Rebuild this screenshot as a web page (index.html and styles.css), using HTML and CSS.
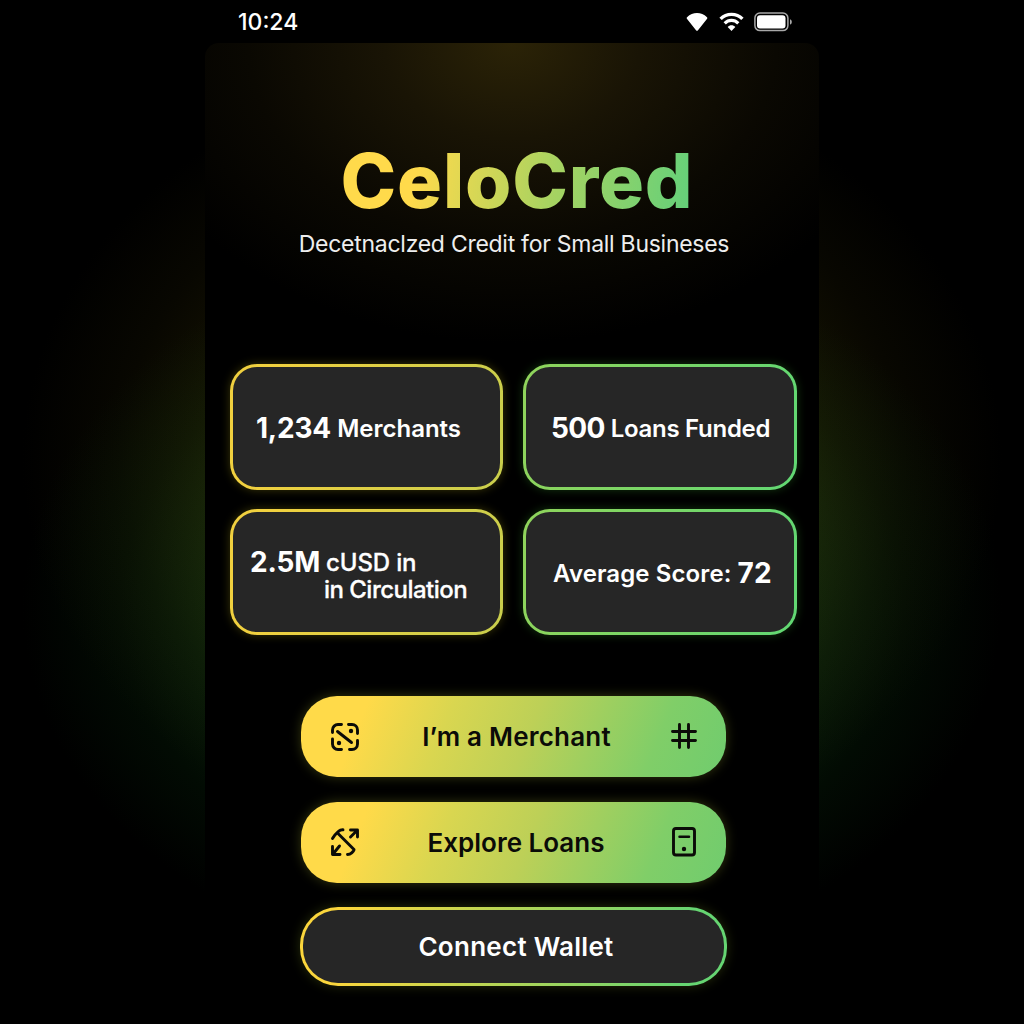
FILE: index.html
```html
<!DOCTYPE html>
<html lang="en">
<head>
<meta charset="utf-8">
<title>CeloCred</title>
<link rel="stylesheet" href="styles.css">
</head>
<body>
<div class="phone">
  <header class="status">
    <span class="time">10:24</span>
    <div class="status-icons">
      <svg class="signal" width="22" height="20" viewBox="0 0 22 20"><path d="M1 5.200C4 2.200 7.300 .9 11 .9s7 1.300 10 4.300c.5.5.5 1 .1 1.500L12 18.200c-.6.8-1.400.8-2 0L.9 6.700C.5 6.200.5 5.700 1 5.200z" fill="#fff"/></svg>
      <svg class="wifi" width="25" height="20" viewBox="0 0 25 20" fill="none" stroke="#fff"><path d="M1.600 6.900C4.600 3.900 8.300 2.400 12.500 2.400s7.900 1.500 10.900 4.500" stroke-width="3.400"/><path d="M5.700 11.300c1.900-1.900 4.200-2.900 6.800-2.900s4.900 1 6.800 2.900" stroke-width="3.200"/><path d="M8.700 15c1-1.100 2.300-1.700 3.800-1.700s2.800.6 3.800 1.700l-3.800 4z" fill="#fff" stroke="none"/></svg>
      <svg class="battery" width="39" height="20" viewBox="0 0 39 20"><rect x=".9" y="1" width="33" height="17.600" rx="5" fill="none" stroke="#a8a8a8" stroke-width="1.500"/><rect x="3" y="3.200" width="28.500" height="13.300" rx="3" fill="#fff"/><path d="M36 7.200c2.400.6 2.400 4.800 0 5.400z" fill="#a8a8a8"/></svg>
    </div>
  </header>
  <main class="panel">
    <h1 class="title">CeloCred</h1>
    <p class="tagline">Decetnaclzed Credit for Small Busineses</p>
    <section class="stats">
      <div class="card gold merchants"><p><b>1,234</b> Merchants</p></div>
      <div class="card green loans"><p><b>500</b> Loans Funded</p></div>
      <div class="card gold supply"><p><b>2.5M</b> <span class="unit">cUSD in</span></p><p class="second">in Circulation</p></div>
      <div class="card green score"><p>Average Score: <b>72</b></p></div>
    </section>
    <nav class="actions">
      <button class="btn filled">
        <svg width="30" height="30" viewBox="0 0 30 30" fill="none" stroke="#0b0b08" stroke-width="2.900" stroke-linecap="round"><path d="M2.500 10.500V8A5.500 5.500 0 0 1 8 2.500h3.500M18.500 2.500H22A5.500 5.500 0 0 1 27.500 8v3.500M27.500 18.500V22a5.500 5.500 0 0 1-5.500 5.500h-2.500M11.500 27.500H8A5.500 5.500 0 0 1 2.500 22v-5M7.500 9.500l14 11"/><g fill="#0b0b08" stroke="none"><circle cx="21" cy="9" r="2.200"/><circle cx="9" cy="21" r="2.200"/></g></svg>
        <span class="label merchant-label">I’m a Merchant</span>
        <svg width="28" height="30" viewBox="0 0 28 30" fill="none" stroke="#0b0b08" stroke-width="2.900" stroke-linecap="round"><path d="M9.500 2.500v23M18.500 2.500v23M2.500 9.500h23M2.500 18.500h23"/></svg>
      </button>
      <button class="btn filled explore">
        <svg width="30" height="30" viewBox="0 0 30 30" fill="none" stroke="#0b0b08" stroke-width="2.900" stroke-linecap="round" stroke-linejoin="round"><path d="M2.500 11.500C4 8.800 6 6.600 8.500 4.400c1.300-1.200 2.800-1.700 4.500-1.600M8 6.500 24 22.500c.5.600-1 2.200-2.300 3.400-1.200 1.100-2.500 1.600-4.200 1.600M20.500 3h7v7M27 3.500l-6.500 6.500M2.500 19.500v8h7.500M3 27l6.500-8"/></svg>
        <span class="label">Explore Loans</span>
        <svg width="28" height="32" viewBox="0 0 28 32" fill="none" stroke="#0b0b08" stroke-width="2.900" stroke-linecap="round"><rect x="3.500" y="2.500" width="21" height="26.500" rx="2.500"/><path d="M9.500 10.800h9.500" stroke-width="2.500"/><circle cx="14" cy="23" r="2.200" fill="#0b0b08" stroke="none"/></svg>
      </button>
      <button class="btn outline"><span class="label wallet-label">Connect Wallet</span></button>
    </nav>
  </main>
</div>
</body>
</html>
```
FILE: styles.css
```css
* { box-sizing: border-box; }
body {
  margin: 0;
  height: 1024px;
  overflow: hidden;
  display: flex;
  justify-content: center;
  font-family: Inter, "Liberation Sans", sans-serif;
  color: #fff;
  background:
    radial-gradient(ellipse 490px 400px at 512px 460px, #151302 0%, #131102 62%, #080701 80%, #000 100%),
    radial-gradient(ellipse 490px 370px at 512px 605px, #08200a 0%, #071a08 62%, #020b03 80%, #000 100%),
    #000;
  background-blend-mode: screen;
}
.phone { width: 614px; height: 1024px; display: flex; flex-direction: column; background: #000; }
.status { height: 43px; padding: 0 26px 0 33px; display: flex; align-items: center; justify-content: space-between; }
.time { font-size: 23px; font-weight: 500; line-height: 43px; padding-top: 2px; }
.status-icons { display: flex; align-items: center; padding-top: 1px; }
.signal { margin-right: 11px; }
.wifi { margin-right: 10px; }
.panel {
  flex: 1;
  display: flex;
  flex-direction: column;
  align-items: center;
  border-radius: 14px 14px 0 0;
  background: radial-gradient(ellipse 400px 300px at 50% 0, #2b2307 0%, #191405 32%, #0a0802 66%, #000 100%);
}
.title {
  margin: 92px 0 0 10px;
  font-size: 75px;
  line-height: 92px;
  font-weight: 800;
  letter-spacing: 0.8px;
  white-space: nowrap;
  color: transparent;
  background: linear-gradient(100deg, #ffda4b 22%, #a7d361 60%, #61d07b 100%);
  -webkit-background-clip: text;
  background-clip: text;
}
.tagline { margin: 0 0 0 4px; font-size: 23px; line-height: 34px; letter-spacing: -0.27px; color: #eee; white-space: nowrap; }
.stats { margin: 103px 0 0 3px; display: grid; grid-template-columns: 273px 274px; grid-template-rows: 126px 126px; gap: 19px 20px; }
.card {
  display: flex;
  flex-direction: column;
  justify-content: center;
  padding-top: 2px;
  border: 3px solid transparent;
  border-radius: 27px;
  font-size: 24px;
  line-height: 28px;
  font-weight: 600;
  white-space: nowrap;
}
.card p { margin: 0; }
.card b { font-size: 28px; font-weight: 700; line-height: 1; vertical-align: -1px; }
.gold { background: linear-gradient(#262626, #262626) padding-box, linear-gradient(100deg, #f0d03f 15%, #c9ce4c) border-box; box-shadow: 0 0 10px rgba(240, 220, 30, .24); }
.green { background: linear-gradient(#262626, #262626) padding-box, linear-gradient(100deg, #90d45b, #61d873) border-box; box-shadow: 0 0 10px rgba(80, 220, 60, .24); }
.merchants { padding-left: 23px; }
.merchants b { letter-spacing: -0.2px; }
.loans { padding-left: 25px; letter-spacing: -0.28px; }
.loans b { letter-spacing: -0.6px; }
.supply { padding-top: 6px; padding-left: 17px; letter-spacing: -0.15px; }
.supply p { line-height: 27px; }
.unit, .supply .second { font-weight: 500; -webkit-text-stroke: .3px #fff; }
.supply .second { padding-left: 74px; letter-spacing: -0.53px; }
.score { padding-left: 27px; letter-spacing: 0.1px; }
.actions { margin: 61px 0 0 3px; display: flex; flex-direction: column; align-items: center; }
.btn {
  font: 600 26px/32px Inter, "Liberation Sans", sans-serif;
  display: flex;
  align-items: center;
  justify-content: space-between;
  border: 0;
  padding: 0 28px 0 29px;
  white-space: nowrap;
}
.filled {
  width: 425px;
  height: 81px;
  margin-bottom: 25px;
  border-radius: 36px;
  color: #0b0b08;
  background: linear-gradient(112deg, #ffda49 15%, #d9d650 34%, #bdd057 53%, #80ce68 82%, #70cc6e 100%);
  box-shadow: 0 0 12px rgba(210, 225, 60, .25);
}
.explore { padding-bottom: 1px; }
.label { padding: 1px 0 0 2px; }
.merchant-label { letter-spacing: 0.2px; padding-left: 3px; }
.outline {
  width: 427px;
  height: 79px;
  margin-top: -1px;
  justify-content: center;
  border: 3px solid transparent;
  border-radius: 38px;
  color: #fff;
  background: linear-gradient(#262626, #262626) padding-box, linear-gradient(100deg, #fbd63c 10%, #66d572 90%) border-box;
  box-shadow: 0 0 12px rgba(190, 225, 50, .2);
}
.wallet-label { padding-left: 4px; letter-spacing: 0.28px; }
```
